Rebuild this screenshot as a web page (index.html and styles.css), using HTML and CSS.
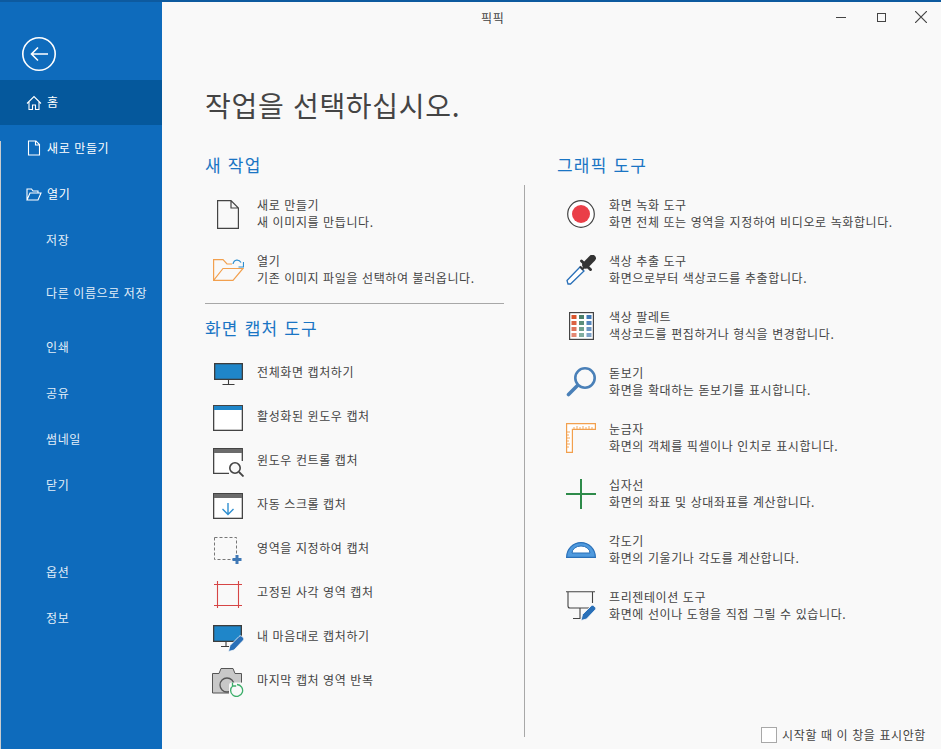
FILE: index.html
```html
<!DOCTYPE html>
<html lang="ko">
<head>
<meta charset="utf-8">
<title>픽픽</title>
<link rel="stylesheet" href="styles.css">
</head>
<body>
<div class="app">
  <aside class="side">
    <div class="back-wrap">
      <svg class="back" width="36" height="36" viewBox="0 0 36 36"><circle cx="18" cy="18" r="16.200" fill="none" stroke="#fff" stroke-width="1.600"/><path d="M27 18H10.500M17 11.500 10.500 18 17 24.500" fill="none" stroke="#fff" stroke-width="1.600"/></svg>
    </div>
    <nav class="nav">
      <a class="nav-item active"><svg class="nav-icon" width="16" height="16" viewBox="0 0 16 16"><path d="M1 8.500 8 1.500l7 7M3 7v7.500h3.500V10h3v4.500H13V7" fill="none" stroke="#fff" stroke-width="1.100"/></svg>홈</a>
      <a class="nav-item"><svg class="nav-icon" width="16" height="16" viewBox="0 0 16 16"><path d="M2.500 1H10l3.500 3.500v10.500h-11ZM9.500 1v4h4" fill="none" stroke="#fff" stroke-width="1.100"/></svg>새로 만들기</a>
      <a class="nav-item"><svg class="nav-icon" width="16" height="16" viewBox="0 0 16 16"><path d="M1 14V3h4.500l1.500 2h5v2M1 14l3-7h11l-3 7Z" fill="none" stroke="#fff" stroke-width="1.100"/></svg>열기</a>
      <a class="nav-item plain">저장</a>
      <a class="nav-item plain tall">다른 이름으로 저장</a>
      <a class="nav-item plain">인쇄</a>
      <a class="nav-item plain">공유</a>
      <a class="nav-item plain">썸네일</a>
      <a class="nav-item plain">닫기</a>
    </nav>
    <nav class="nav nav-bottom">
      <a class="nav-item plain">옵션</a>
      <a class="nav-item plain">정보</a>
    </nav>
  </aside>
  <main class="main">
    <header class="titlebar">
      <div class="app-name">픽픽</div>
      <div class="win-btns">
        <svg class="btn-min" width="10" height="10" viewBox="0 0 10 10"><path d="M0 5.500H10" stroke="#444" stroke-width="1"/></svg>
        <svg class="btn-max" width="9" height="9" viewBox="0 0 9 9"><rect x=".5" y=".5" width="8" height="8" fill="none" stroke="#444" stroke-width="1"/></svg>
        <svg class="btn-close" width="12" height="12" viewBox="0 0 12 12"><path d="M0 0 12 12M12 0 0 12" stroke="#444" stroke-width="1.200"/></svg>
      </div>
    </header>
    <h1 class="page-title">작업을 선택하십시오.</h1>
    <div class="columns">
      <section class="col-left">
        <h2 class="group-title">새 작업</h2>
        <ul class="list big first">
          <li class="row"><span class="ico"><svg width="22" height="29" viewBox="0 0 22 29"><path d="M.6.6H14L21.400 8V28.400H.6ZM14 .6V8H21.400" fill="none" stroke="#444" stroke-width="1.200"/></svg></span><div><div>새로 만들기</div><div>새 이미지를 만듭니다.</div></div></li>
          <li class="row"><span class="ico"><svg width="31" height="22" viewBox="0 0 31 22"><path d="M.6 21.400V.6H10L14 5H19M.6 21.400H20L30 9.500H10Z" fill="none" stroke="#f2a04e" stroke-width="1.200"/><path d="M20 5c1-5 6-5 8-1.500M30.500 3v5h-5" fill="none" stroke="#2f8fd0" stroke-width="1.200"/></svg></span><div><div>열기</div><div>기존 이미지 파일을 선택하여 불러옵니다.</div></div></li>
        </ul>
        <hr class="rule">
        <h2 class="group-title">화면 캡처 도구</h2>
        <ul class="list small">
          <li class="row"><span class="ico"><svg width="29" height="22" viewBox="0 0 29 22"><rect x=".65" y=".65" width="27.700" height="15.700" fill="#1f86c9" stroke="#3d3d3d" stroke-width="1.300"/><path d="M14.500 16v5M8.500 21.500h12" stroke="#3d3d3d" stroke-width="1.100"/></svg></span><div>전체화면 캡처하기</div></li>
          <li class="row"><span class="ico"><svg width="30" height="26" viewBox="0 0 30 26"><rect x=".65" y=".65" width="28.700" height="24.700" fill="#fff" stroke="#444" stroke-width="1.300"/><rect x="1" y="1" width="28" height="4" fill="#1f86c9"/></svg></span><div>활성화된 윈도우 캡처</div></li>
          <li class="row"><span class="ico"><svg width="31" height="29" viewBox="0 0 31 29"><path d="M29.300 13V.65H.65V25.300H16" fill="#fff" stroke="#444" stroke-width="1.300"/><rect x="1" y="1" width="28" height="4" fill="#6b6b6b"/><circle cx="22" cy="20" r="5.200" fill="#f9f9f9" stroke="#444" stroke-width="1.600"/><path d="M26 24l4.500 4.500" stroke="#444" stroke-width="1.800"/></svg></span><div>윈도우 컨트롤 캡처</div></li>
          <li class="row"><span class="ico"><svg width="30" height="26" viewBox="0 0 30 26"><rect x=".65" y=".65" width="28.700" height="24.700" fill="#fff" stroke="#444" stroke-width="1.300"/><rect x="1" y="1" width="28" height="4" fill="#6b6b6b"/><path d="M15 10v11M9.500 16 15 21.500 20.500 16" fill="none" stroke="#2f8fd0" stroke-width="1.400"/></svg></span><div>자동 스크롤 캡처</div></li>
          <li class="row"><span class="ico"><svg width="28" height="27" viewBox="0 0 28 27"><rect x=".5" y=".5" width="22" height="22" fill="none" stroke="#777" stroke-dasharray="3 2"/><path d="M18.500 22.500h9M23 18v9" stroke="#3f78b5" stroke-width="3"/></svg></span><div>영역을 지정하여 캡처</div></li>
          <li class="row"><span class="ico"><svg width="28" height="27" viewBox="0 0 28 27"><path d="M0 3.500H28M0 24.500H28M3.500 0V27M24.500 0V27" stroke="#d64545" stroke-width="1.100"/></svg></span><div>고정된 사각 영역 캡처</div></li>
          <li class="row"><span class="ico"><svg width="31" height="27" viewBox="0 0 31 27"><rect x=".65" y=".65" width="27.700" height="15.700" fill="#1f86c9" stroke="#3d3d3d" stroke-width="1.300"/><path d="M13 17v5M8 21.500h8" stroke="#3d3d3d" stroke-width="1.100"/><path d="M15.500 26.500l1.500-6L26 11.500c1-1 2-1 3 0l1 1c1 1 1 2 0 3L21 25Z" fill="#2a70b8" stroke="#f9f9f9" stroke-width=".8"/></svg></span><div>내 마음대로 캡처하기</div></li>
          <li class="row"><span class="ico"><svg width="32" height="29" viewBox="0 0 32 29"><path d="M.5 5.500h6.500l2-5h12l2 5h6.500v19.500H.5Z" fill="#c8c8c8" stroke="#555" stroke-width="1"/><circle cx="15" cy="17" r="7" fill="none" stroke="#555" stroke-width="1.300"/><rect x="17" y="14.500" width="15" height="14.500" rx="3" fill="#f9f9f9"/><path d="M21 17.700a6 6 0 1 0 4-1.200M20.500 14.500v3.500h3.700" fill="none" stroke="#3cae6a" stroke-width="1.300"/></svg></span><div>마지막 캡처 영역 반복</div></li>
        </ul>
      </section>
      <section class="col-right">
        <h2 class="group-title">그래픽 도구</h2>
        <ul class="list big tools">
          <li class="row"><span class="ico"><svg width="28" height="28" viewBox="0 0 28 28"><circle cx="14" cy="14" r="13.300" fill="#fff" stroke="#444" stroke-width="1.200"/><circle cx="14" cy="14" r="9" fill="#ea3f48"/></svg></span><div><div>화면 녹화 도구</div><div>화면 전체 또는 영역을 지정하여 비디오로 녹화합니다.</div></div></li>
          <li class="row"><span class="ico"><svg width="30" height="30" viewBox="0 0 30 30"><path d="M1 25.500 14 12l4 4L4.500 29H2Z" fill="#fff" stroke="#2a70b8" stroke-width="1.300"/><path d="M15.500 6 24.500 14.500" stroke="#333" stroke-width="3" stroke-linecap="round"/><path d="M19.700 10 26.300 3.300" stroke="#333" stroke-width="7" stroke-linecap="round"/><path d="M14 11.500l2.500 2.500 2-2" fill="none" stroke="#333" stroke-width="2"/></svg></span><div><div>색상 추출 도구</div><div>화면으로부터 색상코드를 추출합니다.</div></div></li>
          <li class="row"><span class="ico"><svg width="25" height="28" viewBox="0 0 25 28"><rect x=".6" y=".6" width="23.800" height="26.800" fill="#fff" stroke="#444" stroke-width="1.200"/><rect x="2.500" y="3" width="5" height="4" fill="#d9542b"/><rect x="10" y="3" width="5" height="4" fill="#4a7f6a"/><rect x="17.500" y="3" width="5" height="4" fill="#3f78b5"/><rect x="2.500" y="9" width="5" height="4" fill="#db6342"/><rect x="10" y="9" width="5" height="4" fill="#5c8e7b"/><rect x="17.500" y="9" width="5" height="4" fill="#5586bd"/><rect x="2.500" y="15" width="5" height="4" fill="#df735a"/><rect x="10" y="15" width="5" height="4" fill="#6fa08e"/><rect x="17.500" y="15" width="5" height="4" fill="#6a94c0"/><rect x="2.500" y="21" width="5" height="4" fill="#e48872"/><rect x="10" y="21" width="5" height="4" fill="#82aea0"/><rect x="17.500" y="21" width="5" height="4" fill="#7fa3c8"/></svg></span><div><div>색상 팔레트</div><div>색상코드를 편집하거나 형식을 변경합니다.</div></div></li>
          <li class="row"><span class="ico"><svg width="30" height="30" viewBox="0 0 30 30"><circle cx="19" cy="11" r="9.700" fill="none" stroke="#4a80b8" stroke-width="2.600"/><path d="M11.500 18.500 2.500 27.500" stroke="#4a80b8" stroke-width="3.600" stroke-linecap="round"/></svg></span><div><div>돋보기</div><div>화면을 확대하는 돋보기를 표시합니다.</div></div></li>
          <li class="row"><span class="ico"><svg width="30" height="30" viewBox="0 0 30 30"><path d="M.6.6H29.400V6.400H6.400V29.400H.6Z" fill="#fff" stroke="#f2a04e" stroke-width="1.200"/><path d="M8 6V4M11 6V3M14 6V4M17 6V3M20 6V4M23 6V3M26 6V4M1 9h3M1 12h2M1 15h3M1 18h2M1 21h3M1 24h2" stroke="#f2a04e" stroke-width=".9"/></svg></span><div><div>눈금자</div><div>화면의 객체를 픽셀이나 인치로 표시합니다.</div></div></li>
          <li class="row"><span class="ico"><svg width="30" height="30" viewBox="0 0 30 30"><path d="M0 15H30M15 0V30" stroke="#2e8b4a" stroke-width="2"/></svg></span><div><div>십자선</div><div>화면의 좌표 및 상대좌표를 계산합니다.</div></div></li>
          <li class="row"><span class="ico"><svg width="30" height="16" viewBox="0 0 30 16"><path d="M.6 15.400a14.400 14.800 0 0 1 28.800 0Z" fill="#4f9ade" stroke="#2a70b8" stroke-width="1.200"/><path d="M6 11a9 7 0 0 1 18 0Z" fill="#fff" stroke="#2a70b8"/></svg></span><div><div>각도기</div><div>화면의 기울기나 각도를 계산합니다.</div></div></li>
          <li class="row"><span class="ico"><svg width="30" height="30" viewBox="0 0 30 30"><path d="M0 .7H29M2 .7V15q0 2 2 2H23M26.500 .7V12M14 17V27M7 27.500h7.500" fill="none" stroke="#444" stroke-width="1.100"/><path d="M15 29.500l1.500-6L25 15c1-1 2-1 3 0l1 1c1 1 1 2 0 3L20.500 28Z" fill="#2a70b8" stroke="#f9f9f9" stroke-width=".8"/></svg></span><div><div>프리젠테이션 도구</div><div>화면에 선이나 도형을 직접 그릴 수 있습니다.</div></div></li>
        </ul>
      </section>
    </div>
    <label class="no-show"><span class="check"></span>시작할 때 이 창을 표시안함</label>
  </main>
</div>
</body>
</html>
```
FILE: styles.css
```css
* { box-sizing: border-box; }
html, body { margin: 0; height: 100%; }
body { font-family: "Noto Sans CJK KR", "Noto Sans", sans-serif; font-size: 12px; letter-spacing: .6px; color: #444; overflow: hidden; }
.app { display: flex; width: 941px; height: 749px; background: #f9f9f9; border-top: 2px solid #0d5a9f; position: relative; }
.app::after { content: ""; position: absolute; left: 0; top: 139px; bottom: 0; width: 1px; background: #c8ccd0; }
.side { width: 162px; flex: none; background: #0e6bbc; color: #fff; display: flex; flex-direction: column; padding-top: 34px; }
.back-wrap { height: 44px; padding-left: 21px; }
.nav { display: flex; flex-direction: column; }
.nav-bottom { margin-top: 41px; }
.nav-item { height: 46px; display: flex; align-items: center; padding-left: 47px; position: relative; color: #fff; line-height: 16px; }
.nav-item.plain { padding-left: 46px; color: #e3eef8; }
.nav-item.tall { height: 61px; padding-bottom: 1px; }
.nav-item.active { height: 45px; background: #05589c; padding-bottom: 2px; }
.nav-icon { position: absolute; left: 26px; top: 50%; margin-top: -8px; }
.main { flex: 1; min-width: 0; display: flex; flex-direction: column; position: relative; padding-left: 43px; }
.titlebar { height: 28px; position: relative; }
.app-name { position: absolute; left: 276px; top: 8px; font-size: 12px; line-height: 16px; }
.win-btns { position: absolute; right: 14px; top: 9px; display: flex; align-items: center; }
.btn-min { margin-right: 31px; }
.btn-max { margin-right: 29px; }
.page-title { margin: 55px 0 0; font-size: 28px; font-weight: 400; line-height: 40px; letter-spacing: 0.7px; color: #444; }
.columns { display: flex; margin-top: 28px; }
.col-left { width: 299px; flex: none; }
.col-right { margin-left: 53px; }
.group-title { margin: 0; font-size: 17px; font-weight: 400; line-height: 24px; color: #1a75c4; letter-spacing: 1.2px; }
.list { list-style: none; margin: 0; padding: 0; }
.row { display: flex; align-items: center; line-height: 17px; }
.ico { width: 52px; flex: none; display: flex; justify-content: center; padding-right: 6px; }
.big .row { height: 56px; }
.big .ico { padding-top: 2px; }
.first { margin-top: 8px; padding-bottom: 6px; }
.tools { margin: 11px 0 0 -33px; padding-left: 32px; border-left: 1px solid #a8a8a8; height: 552px; }
.tools .row:first-child { margin-top: -3px; }
.tools .ico { padding-right: 4px; }
.small .row { height: 44px; }
.small .ico { padding-top: 6px; }
.small { margin-top: 9px; }
.rule { margin: 0; border: 0; border-top: 1px solid #a8a8a8; }
.col-left .rule + .group-title { margin-top: 12px; }
.no-show { position: absolute; right: 15px; bottom: 6px; display: flex; align-items: center; gap: 5px; line-height: 16px; }
.check { width: 16px; height: 16px; background: #fff; border: 1px solid #a8a8a8; }
```
